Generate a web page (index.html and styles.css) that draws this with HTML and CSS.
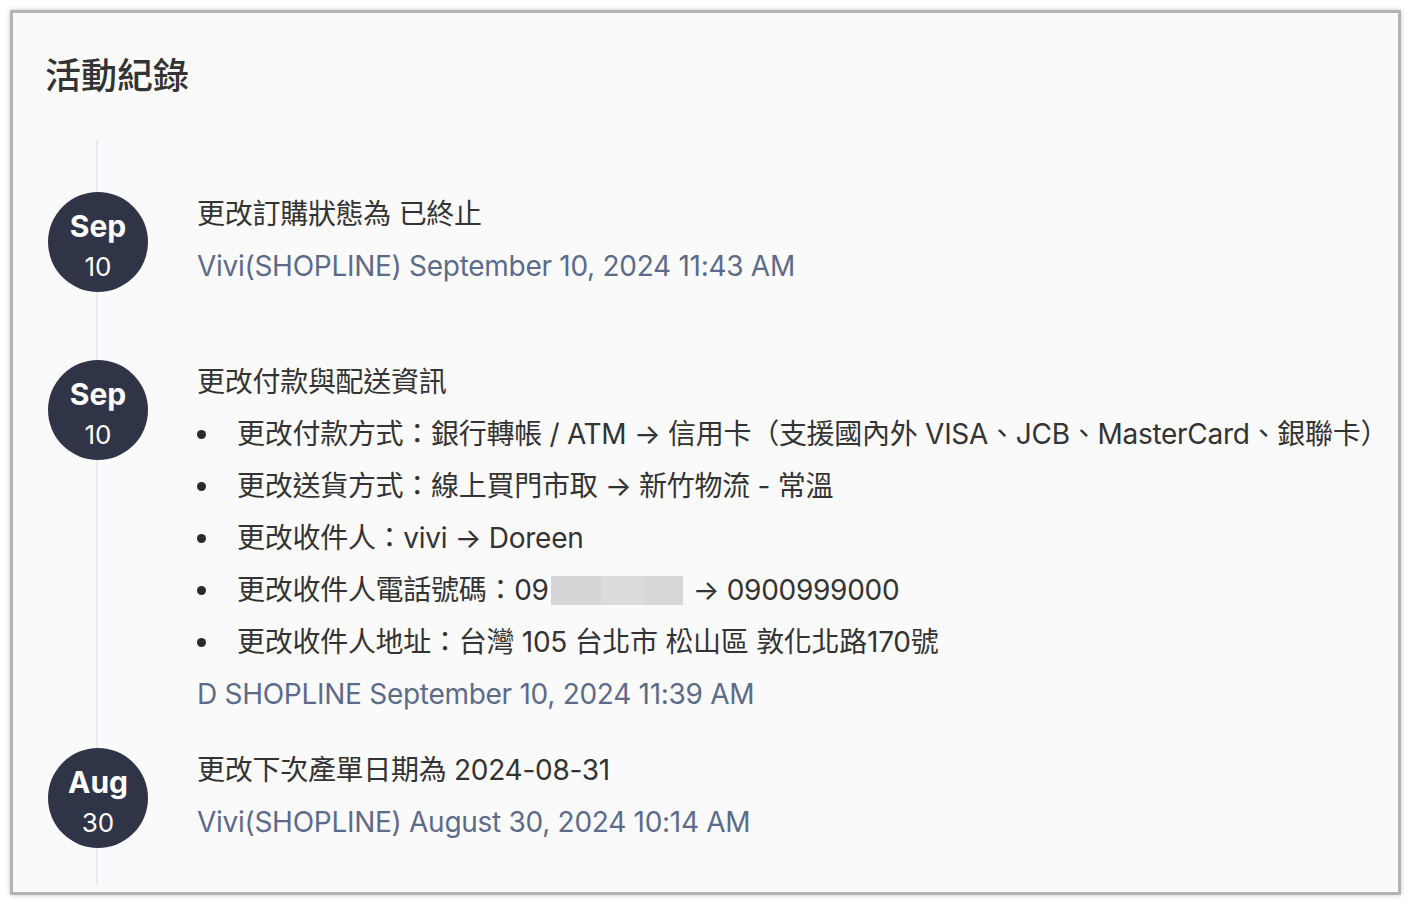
FILE: index.html
```html
<!DOCTYPE html>
<html lang="zh-Hant">
<head>
<meta charset="utf-8">
<title>活動紀錄</title>
<link rel="stylesheet" href="styles.css">
</head>
<body>
<div class="frame">
  <h1 class="title">活動紀錄</h1>
  <div class="timeline">
    <div class="item item-first">
      <div class="badge"><span class="mon">Sep</span><span class="day">10</span></div>
      <div class="content">
        <div class="line">更改訂購狀態為 已終止</div>
        <div class="line meta">Vivi(SHOPLINE) September 10, 2024 11:43 AM</div>
      </div>
    </div>
    <div class="item item-second">
      <div class="badge"><span class="mon">Sep</span><span class="day">10</span></div>
      <div class="content">
        <div class="line">更改付款與配送資訊</div>
        <ul class="bullets">
          <li class="line"><span class="dot"></span><span>更改付款方式：銀行轉帳 / ATM → 信用卡（支援國內外 VISA、JCB、MasterCard、銀聯卡）</span></li>
          <li class="line"><span class="dot"></span><span>更改送貨方式：線上買門市取 → 新竹物流 - 常溫</span></li>
          <li class="line"><span class="dot"></span><span>更改收件人：vivi → Doreen</span></li>
          <li class="line"><span class="dot"></span><span>更改收件人電話號碼：09</span><span class="redact"><i class="r1"></i><i class="r2"></i><i class="r3"></i></span><span>→ 0900999000</span></li>
          <li class="line"><span class="dot"></span><span>更改收件人地址：台灣 105 台北市 松山區 敦化北路170號</span></li>
        </ul>
        <div class="line meta">D SHOPLINE September 10, 2024 11:39 AM</div>
      </div>
    </div>
    <div class="item item-third">
      <div class="badge"><span class="mon">Aug</span><span class="day">30</span></div>
      <div class="content">
        <div class="line">更改下次產單日期為 2024-08-31</div>
        <div class="line meta">Vivi(SHOPLINE) August 30, 2024 10:14 AM</div>
      </div>
    </div>
  </div>
</div>
</body>
</html>
```

FILE: styles.css
```css
* { box-sizing: border-box; }
html, body {
  margin: 0;
  padding: 0;
  background: #ffffff;
}
body {
  padding: 10px 11px 13px 10px;
  font-family: Inter, "Noto Sans CJK TC", "Noto Sans", sans-serif;
  color: #333333;
}
.frame {
  width: 1391px;
  height: 885px;
  border: 3px solid #b4b4b4;
  background: #fafafa;
  box-shadow: 0 0 5px rgba(0, 0, 0, 0.22);
  padding: 0 20px 7px 32px;
}
.title {
  margin: 0;
  padding-top: 42px;
  height: 127px;
  font-size: 36px;
  line-height: 36px;
  font-weight: 500;
  color: #333333;
  font-family: "Noto Sans CJK TC", sans-serif;
}
.timeline {
  position: relative;
  padding: 48px 0 37px 0;
}
.timeline::before {
  content: "";
  position: absolute;
  left: 51px;
  top: 0;
  bottom: 0;
  width: 2px;
  background: #e7ebf1;
}
.item {
  position: relative;
  display: flex;
  align-items: flex-start;
}
.item-second { margin-top: 64px; }
.item-third { margin-top: 24px; }
.badge {
  flex-shrink: 0;
  width: 100px;
  height: 100px;
  margin-top: 4px;
  margin-left: 3px;
  border-radius: 50%;
  background: #2f3447;
  color: #ffffff;
  display: flex;
  flex-direction: column;
  align-items: center;
  justify-content: flex-start;
  font-family: Inter, "Liberation Sans", sans-serif;
}
.mon {
  font-size: 30px;
  font-weight: 700;
  line-height: 36px;
  margin-top: 16px;
}
.day {
  font-size: 26px;
  font-weight: 400;
  line-height: 32px;
  margin-top: 7px;
}
.content {
  margin-left: 49px;
  font-size: 28px;
  letter-spacing: -0.28px;
  color: #333333;
}
.line {
  height: 52px;
  line-height: 52px;
  white-space: nowrap;
}
.meta {
  color: #5d6b8b;
}
.bullets {
  margin: 0;
  padding: 0;
  list-style: none;
}
.bullets li {
  display: flex;
  align-items: center;
}
.dot {
  flex-shrink: 0;
  width: 9px;
  height: 9px;
  border-radius: 50%;
  background: #2b2b2b;
  margin-left: 0;
  margin-right: 31px;
}
.redact {
  display: flex;
  width: 132px;
  height: 29px;
  margin-left: 2px;
  margin-right: 10px;
}
.redact i {
  display: block;
  height: 100%;
}
.r1 { width: 50px; background: #d6d6d9; }
.r2 { width: 42px; background: #dcdcdf; }
.r3 { width: 40px; background: #d8d8db; }
```
